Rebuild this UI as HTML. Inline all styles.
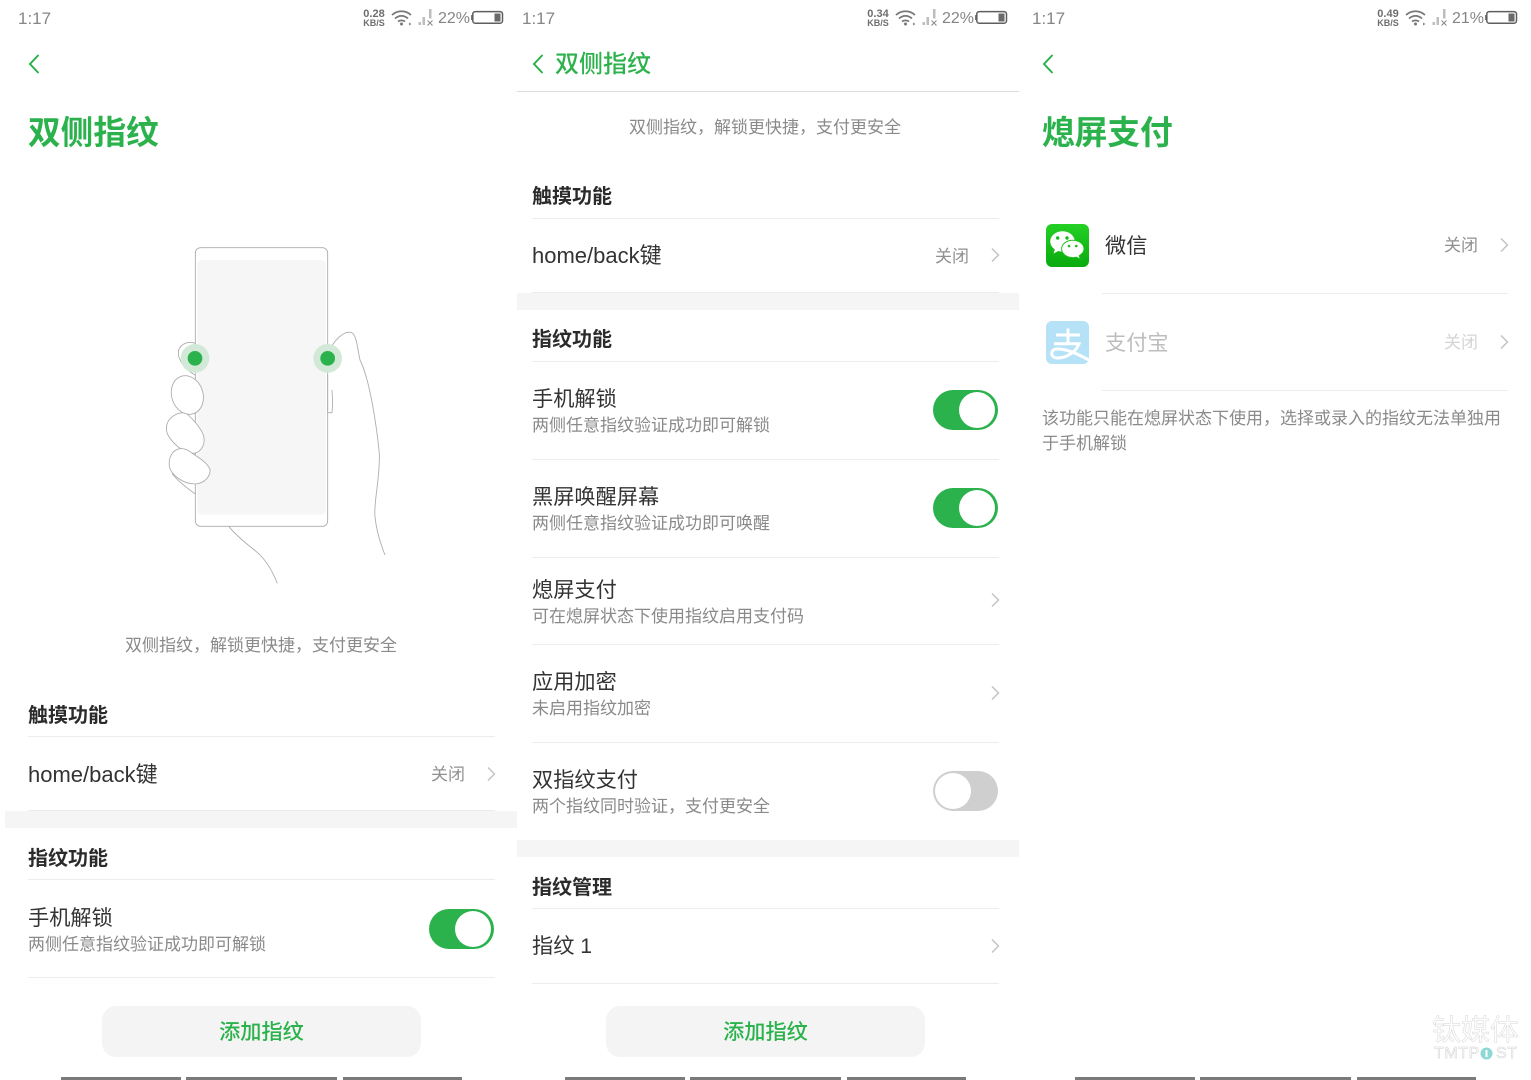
<!DOCTYPE html>
<html lang="zh"><head><meta charset="utf-8"><title>双侧指纹</title>
<style>
html,body{margin:0;padding:0;background:#fff}
#p{position:relative;width:1531px;height:1080px;overflow:hidden;background:#fff;font-family:"Liberation Sans","Noto Sans CJK SC",sans-serif;color:#333}
#p *{box-sizing:border-box}
.t{position:absolute;white-space:nowrap;line-height:30px;height:30px;margin-top:2px}
.h1{font-size:32.7px;font-weight:700;color:#2bb24c;line-height:40px;height:40px;margin-top:1px}
.sec{font-size:20px;font-weight:700;color:#2b2b2b;margin-top:1px}
.it{font-size:21.2px;color:#333}
.lat{font-size:22px}
.sub{font-size:17px;color:#8a8a8a}
.tx{margin-top:1px}
.off{font-size:17px;color:#909090;margin-top:1px}
.st{font-size:17px;color:#858585;margin-top:1px}
.pc{font-size:16px}
.hr{position:absolute;height:1px;background:#ececec}
.band{position:absolute;height:17px;background:#f5f5f5}
.btn{position:absolute;width:319px;height:51px;top:1006px;border-radius:14px;background:#f4f4f4;color:#2bb24c;font-size:21.2px;font-weight:500;text-align:center;line-height:54px}
.nav{position:absolute;top:1077px;height:3px;background:#7a7a7a}
.tg{position:absolute;width:65px;height:40px;border-radius:20px;background:#2bb24c}
.tg i{position:absolute;top:2px;right:3px;width:36px;height:36px;border-radius:50%;background:#fff;display:block}
.tg.o{background:#cfcfcf}
.tg.o i{left:2px;right:auto}
svg{position:absolute;overflow:visible}
.ch{width:8px;height:14px;fill:none;stroke:#c4c4c4;stroke-width:1.5}
.bk{width:10px;height:20px;fill:none;stroke:#2bb24c;stroke-width:2}
.net{position:absolute;font-weight:700;color:#6e6e6e;line-height:9px;text-align:center;white-space:nowrap}
.wm{position:absolute;white-space:nowrap;line-height:30px;height:30px;color:#fff}
</style></head><body><div id="p">

<!-- status bars -->
<div class="t st" style="left:18px;top:3px">1:17</div>
<div class="t st" style="left:522px;top:3px">1:17</div>
<div class="t st" style="left:1032px;top:3px">1:17</div>

<div class="net" style="left:362px;top:10px;width:24px;font-size:11px">0.28</div>
<div class="net" style="left:362px;top:19px;width:24px;font-size:9px">KB/S</div>
<div class="net" style="left:866px;top:10px;width:24px;font-size:11px">0.34</div>
<div class="net" style="left:866px;top:19px;width:24px;font-size:9px">KB/S</div>
<div class="net" style="left:1376px;top:10px;width:24px;font-size:11px">0.49</div>
<div class="net" style="left:1376px;top:19px;width:24px;font-size:9px">KB/S</div>

<svg style="left:390px;top:9px" width="44" height="18" viewBox="0 0 44 18" fill="none" stroke="#777" stroke-width="1.8"><path d="M2 6C7.500 1 15.500 1 21 6M5 9.500C9 6 14 6 18 9.500M8 12.500C10 11 13 11 15 12.500"/><circle cx="11.500" cy="15" r="1.500" fill="#777" stroke="none"/><path d="M19 13.500v3l2.500-1.500z" fill="#888" stroke="none"/><path d="M28.500 13h2.500v3h-2.500zM32.500 8h2.500v8h-2.500zM39 0h2.500v9.500h-2.500z" fill="#bdbdbd" stroke="none"/><path d="M37.500 11.500l5 5M42.500 11.500l-5 5" stroke="#8c8c8c" stroke-width="1.100"/></svg>
<svg style="left:894px;top:9px" width="44" height="18" viewBox="0 0 44 18" fill="none" stroke="#777" stroke-width="1.8"><path d="M2 6C7.500 1 15.500 1 21 6M5 9.500C9 6 14 6 18 9.500M8 12.500C10 11 13 11 15 12.500"/><circle cx="11.500" cy="15" r="1.500" fill="#777" stroke="none"/><path d="M19 13.500v3l2.500-1.500z" fill="#888" stroke="none"/><path d="M28.500 13h2.500v3h-2.500zM32.500 8h2.500v8h-2.500zM39 0h2.500v9.500h-2.500z" fill="#bdbdbd" stroke="none"/><path d="M37.500 11.500l5 5M42.500 11.500l-5 5" stroke="#8c8c8c" stroke-width="1.100"/></svg>
<svg style="left:1404px;top:9px" width="44" height="18" viewBox="0 0 44 18" fill="none" stroke="#777" stroke-width="1.8"><path d="M2 6C7.500 1 15.500 1 21 6M5 9.500C9 6 14 6 18 9.500M8 12.500C10 11 13 11 15 12.500"/><circle cx="11.500" cy="15" r="1.500" fill="#777" stroke="none"/><path d="M19 13.500v3l2.500-1.500z" fill="#888" stroke="none"/><path d="M28.500 13h2.500v3h-2.500zM32.500 8h2.500v8h-2.500zM39 0h2.500v9.500h-2.500z" fill="#bdbdbd" stroke="none"/><path d="M37.500 11.500l5 5M42.500 11.500l-5 5" stroke="#8c8c8c" stroke-width="1.100"/></svg>

<div class="t st pc" style="left:438px;top:3px">22%</div>
<div class="t st pc" style="left:942px;top:3px">22%</div>
<div class="t st pc" style="left:1452px;top:3px">21%</div>

<svg style="left:471px;top:10px" width="33" height="15" viewBox="0 0 33 15"><rect x="0" y="5" width="1.500" height="5" fill="#777"/><rect x="1.800" y="1.600" width="29.700" height="11.600" rx="2.500" fill="#fff" stroke="#5f5f5f" stroke-width="1.500"/><rect x="23.500" y="3.500" width="6" height="8" fill="#6a6a6a"/></svg>
<svg style="left:975px;top:10px" width="33" height="15" viewBox="0 0 33 15"><rect x="0" y="5" width="1.500" height="5" fill="#777"/><rect x="1.800" y="1.600" width="29.700" height="11.600" rx="2.500" fill="#fff" stroke="#5f5f5f" stroke-width="1.500"/><rect x="23.500" y="3.500" width="6" height="8" fill="#6a6a6a"/></svg>
<svg style="left:1485px;top:10px" width="33" height="15" viewBox="0 0 33 15"><rect x="0" y="5" width="1.500" height="5" fill="#777"/><rect x="1.800" y="1.600" width="29.700" height="11.600" rx="2.500" fill="#fff" stroke="#5f5f5f" stroke-width="1.500"/><rect x="23.500" y="3.500" width="6" height="8" fill="#6a6a6a"/></svg>

<!-- PANEL 1 -->
<svg class="bk" style="left:29px;top:54px" viewBox="0 0 10 20"><path d="M9.500 1L1 10l8.500 9"/></svg>
<div class="t h1" style="left:28px;top:112px">双侧指纹</div>

<svg style="left:150px;top:240px" width="250" height="350" viewBox="0 0 750 1050" fill="none" stroke="#ababab" stroke-width="2.600">
<rect x="142" y="60" width="386" height="764" rx="14" fill="#f6f6f6" stroke="none"/>
<rect x="136" y="23" width="397" height="836" rx="16"/>
<path d="M135 310C115 302 92 312 86 330C80 352 100 385 135 405" fill="#fff"/>
<ellipse cx="112" cy="465" rx="47" ry="59" transform="rotate(-18 112 465)" fill="#fff"/>
<path d="M70 528C50 540 44 565 54 585C68 610 100 640 132 640C155 636 168 610 160 585C150 560 130 540 115 525C100 514 85 518 70 528Z" fill="#fff"/>
<path d="M90 626C65 630 55 655 58 680C64 705 100 732 135 732C165 730 182 708 180 688C170 665 140 650 120 635C108 627 100 625 90 626Z" fill="#fff"/>
<path d="M66 700C85 725 112 745 136 762"/>
<path d="M533 405V518H546L548 490L546 450"/>
<path d="M537 340C548 300 585 270 605 278C620 285 622 325 630 360C660 420 680 560 688 640C690 720 670 790 675 830C680 880 695 920 705 945"/>
<path d="M237 860C270 900 310 925 330 945C355 970 370 1000 382 1030"/>
<circle cx="135" cy="355" r="43" fill="#d3e9d7" stroke="none"/>
<circle cx="533" cy="355" r="43" fill="#d3e9d7" stroke="none"/>
<circle cx="135" cy="355" r="22" fill="#2bb24c" stroke="none"/>
<circle cx="533" cy="355" r="22" fill="#2bb24c" stroke="none"/>
</svg>

<div class="t sub tx" style="left:125px;top:630px">双侧指纹，解锁更快捷，支付更安全</div>
<div class="t sec" style="left:28px;top:700px">触摸功能</div>
<div class="hr" style="left:28px;width:467px;top:736px"></div>
<div class="t it lat" style="left:28px;top:758px">home/back键</div>
<div class="t off" style="left:431px;top:759px">关闭</div>
<svg class="ch" style="left:487px;top:767px" viewBox="0 0 8 14"><path d="M1 0.500l6.500 6.500-6.500 6.500"/></svg>
<div class="hr" style="left:28px;width:467px;top:810px"></div>
<div class="band" style="left:5px;width:512px;top:811px"></div>
<div class="t sec" style="left:28px;top:843px">指纹功能</div>
<div class="hr" style="left:28px;width:467px;top:879px"></div>
<div class="t it" style="left:28px;top:902px">手机解锁</div>
<div class="t sub" style="left:28px;top:928px">两侧任意指纹验证成功即可解锁</div>
<div class="tg" style="left:429px;top:909px"><i></i></div>
<div class="hr" style="left:28px;width:467px;top:977px"></div>
<div class="btn" style="left:102px">添加指纹</div>
<div class="nav" style="left:61px;width:120px"></div>
<div class="nav" style="left:186px;width:151px"></div>
<div class="nav" style="left:343px;width:119px"></div>

<!-- PANEL 2 -->
<svg class="bk" style="left:533px;top:54px" viewBox="0 0 10 20"><path d="M9.500 1L1 10l8.500 9"/></svg>
<div class="t" style="left:555px;top:49px;font-size:24px;font-weight:500;color:#2bb24c;margin-top:1px">双侧指纹</div>
<div class="hr" style="left:517px;width:502px;top:91px;background:#dedede"></div>
<div class="t sub tx" style="left:629px;top:112px">双侧指纹，解锁更快捷，支付更安全</div>
<div class="t sec" style="left:532px;top:181px">触摸功能</div>
<div class="hr" style="left:532px;width:467px;top:218px"></div>
<div class="t it lat" style="left:532px;top:239px">home/back键</div>
<div class="t off" style="left:935px;top:241px">关闭</div>
<svg class="ch" style="left:991px;top:248px" viewBox="0 0 8 14"><path d="M1 0.500l6.500 6.500-6.500 6.500"/></svg>
<div class="hr" style="left:532px;width:467px;top:292px"></div>
<div class="band" style="left:517px;width:502px;top:293px"></div>
<div class="t sec" style="left:532px;top:324px">指纹功能</div>
<div class="hr" style="left:532px;width:467px;top:361px"></div>
<div class="t it" style="left:532px;top:383px">手机解锁</div>
<div class="t sub" style="left:532px;top:409px">两侧任意指纹验证成功即可解锁</div>
<div class="tg" style="left:933px;top:390px"><i></i></div>
<div class="hr" style="left:532px;width:467px;top:459px"></div>
<div class="t it" style="left:532px;top:481px">黑屏唤醒屏幕</div>
<div class="t sub" style="left:532px;top:507px">两侧任意指纹验证成功即可唤醒</div>
<div class="tg" style="left:933px;top:488px"><i></i></div>
<div class="hr" style="left:532px;width:467px;top:557px"></div>
<div class="t it" style="left:532px;top:574px">熄屏支付</div>
<div class="t sub" style="left:532px;top:600px">可在熄屏状态下使用指纹启用支付码</div>
<svg class="ch" style="left:991px;top:593px" viewBox="0 0 8 14"><path d="M1 0.500l6.500 6.500-6.500 6.500"/></svg>
<div class="hr" style="left:532px;width:467px;top:644px"></div>
<div class="t it" style="left:532px;top:666px">应用加密</div>
<div class="t sub" style="left:532px;top:692px">未启用指纹加密</div>
<svg class="ch" style="left:991px;top:686px" viewBox="0 0 8 14"><path d="M1 0.500l6.500 6.500-6.500 6.500"/></svg>
<div class="hr" style="left:532px;width:467px;top:742px"></div>
<div class="t it" style="left:532px;top:764px">双指纹支付</div>
<div class="t sub" style="left:532px;top:790px">两个指纹同时验证，支付更安全</div>
<div class="tg o" style="left:933px;top:771px"><i></i></div>
<div class="band" style="left:517px;width:502px;top:840px"></div>
<div class="t sec" style="left:532px;top:872px">指纹管理</div>
<div class="hr" style="left:532px;width:467px;top:908px"></div>
<div class="t it" style="left:532px;top:930px">指纹 1</div>
<svg class="ch" style="left:991px;top:939px" viewBox="0 0 8 14"><path d="M1 0.500l6.500 6.500-6.500 6.500"/></svg>
<div class="hr" style="left:532px;width:467px;top:983px"></div>
<div class="btn" style="left:606px">添加指纹</div>
<div class="nav" style="left:565px;width:120px"></div>
<div class="nav" style="left:690px;width:151px"></div>
<div class="nav" style="left:847px;width:119px"></div>

<!-- PANEL 3 -->
<svg class="bk" style="left:1043px;top:54px" viewBox="0 0 10 20"><path d="M9.500 1L1 10l8.500 9"/></svg>
<div class="t h1" style="left:1042px;top:112px">熄屏支付</div>

<svg style="left:1046px;top:224px" width="43" height="43" viewBox="0 0 43 43">
<defs><linearGradient id="wx" x1="0" y1="0" x2="0" y2="1"><stop offset="0" stop-color="#25d025"/><stop offset="1" stop-color="#08aa0e"/></linearGradient></defs>
<rect width="43" height="43" rx="6" fill="url(#wx)"/>
<path d="M16.500 7.300C9.800 7.300 4.300 11.800 4.300 17.500C4.300 20.800 6.100 23.500 8.800 25.400L7.600 29.500L12.300 27C13.600 27.400 15 27.600 16.500 27.600C23.200 27.600 28.700 23.100 28.700 17.500C28.700 11.800 23.200 7.300 16.500 7.300Z" fill="#fff"/>
<path d="M26.800 16.200C20.500 16.200 15.600 20.100 15.600 24.900C15.600 29.700 20.500 33.600 26.800 33.600C28 33.600 29.200 33.400 30.300 33.100L34.200 35.200L33.200 31.700C36 30.100 38 27.700 38 24.900C38 20.100 33.100 16.200 26.800 16.200Z" fill="#fff" stroke="#1fc01f" stroke-width="1"/>
<circle cx="11.700" cy="14" r="1.700" fill="#1cb91c"/><circle cx="21" cy="14" r="1.700" fill="#1cb91c"/>
<circle cx="23" cy="22" r="1.300" fill="#1cb91c"/><circle cx="30.300" cy="22" r="1.300" fill="#1cb91c"/>
</svg>
<div class="t it" style="left:1105px;top:230px">微信</div>
<div class="t off" style="left:1444px;top:230px">关闭</div>
<svg class="ch" style="left:1500px;top:238px" viewBox="0 0 8 14"><path d="M1 0.500l6.500 6.500-6.500 6.500"/></svg>
<div class="hr" style="left:1102px;width:406px;top:293px"></div>

<svg style="left:1046px;top:321px" width="43" height="43" viewBox="0 0 43 43">
<rect width="43" height="43" rx="6" fill="#b5e2f6"/>
<path d="M10 14H34M22 7.500V22.500M8 22.800H33C30 31 20 37.500 11 37C4 36.500 4 28.500 10.500 28C20 27.300 32 33 43 39" fill="none" stroke="#fff" stroke-width="3"/>
</svg>
<div class="t it" style="left:1105px;top:327px;color:#bdbdbd">支付宝</div>
<div class="t off" style="left:1444px;top:327px;color:#d4d4d4">关闭</div>
<svg class="ch" style="left:1500px;top:335px" viewBox="0 0 8 14"><path d="M1 0.500l6.500 6.500-6.500 6.500"/></svg>
<div class="hr" style="left:1102px;width:406px;top:390px"></div>
<div class="t sub tx" style="left:1042px;top:403px">该功能只能在熄屏状态下使用，选择或录入的指纹无法单独用</div>
<div class="t sub tx" style="left:1042px;top:428px">于手机解锁</div>
<div class="nav" style="left:1075px;width:120px"></div>
<div class="nav" style="left:1200px;width:151px"></div>
<div class="nav" style="left:1357px;width:119px"></div>

<!-- watermark -->
<div class="wm" style="left:1432px;top:1016px;font-size:29px;-webkit-text-stroke:.5px #d6d6d6">钛媒体</div>
<div class="wm" style="left:1434px;top:1039px;font-size:16px;letter-spacing:.6px;-webkit-text-stroke:.5px #cfcfcf">TMTP</div>
<svg style="left:1480px;top:1047px" width="13" height="13" viewBox="0 0 13 13"><circle cx="6.500" cy="6.500" r="6" fill="#8ed8d6"/><rect x="5.500" y="3" width="2" height="7" fill="#fff"/></svg>
<div class="wm" style="left:1496px;top:1039px;font-size:16px;letter-spacing:.6px;-webkit-text-stroke:.5px #cfcfcf">ST</div>

</div></body></html>
